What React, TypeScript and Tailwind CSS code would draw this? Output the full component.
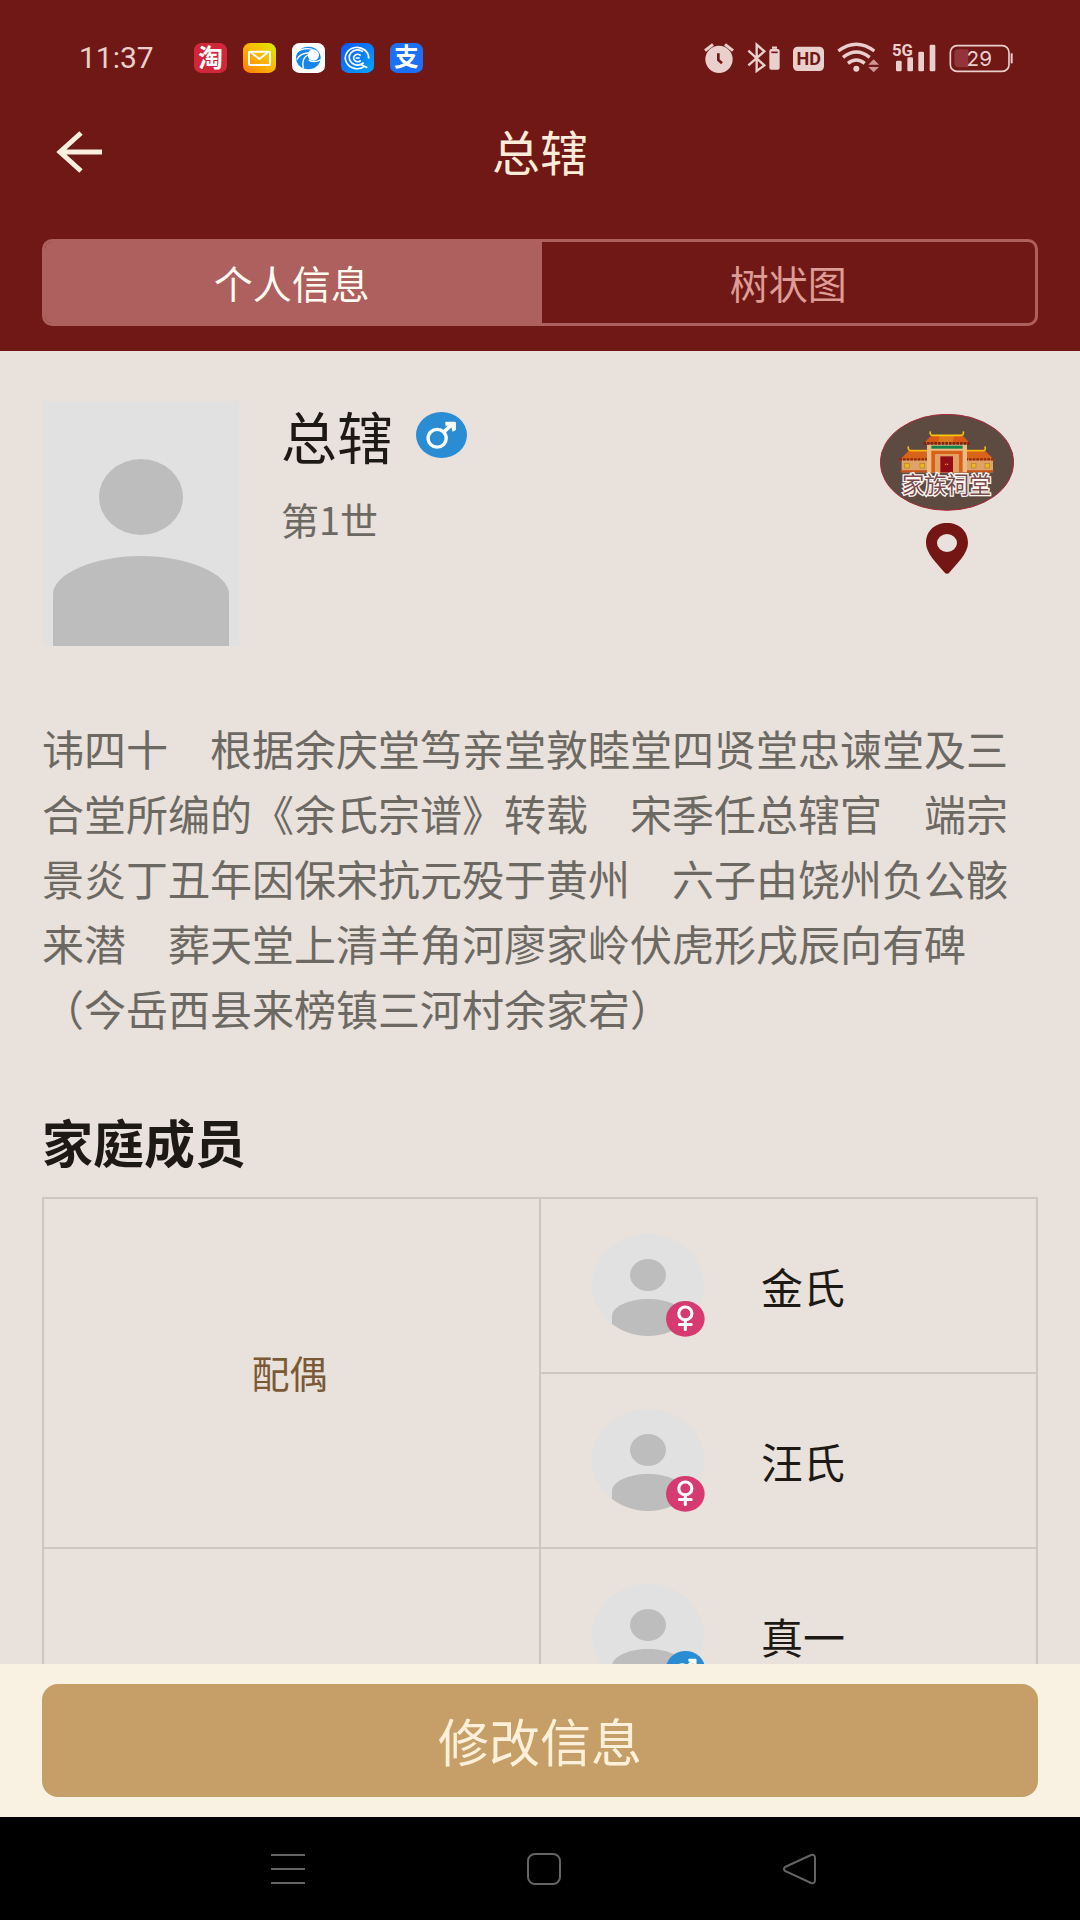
import React from "react";

type Gender = "male" | "female";

interface Member {
  name: string;
  gender: Gender;
}

const spouses: Member[] = [
  { name: "金氏", gender: "female" },
  { name: "汪氏", gender: "female" },
];

const children: Member[] = [{ name: "真一", gender: "male" }];

const biography =
  "讳四十　根据余庆堂笃亲堂敦睦堂四贤堂忠谏堂及三合堂所编的《余氏宗谱》转载　宋季任总辖官　端宗景炎丁丑年因保宋抗元殁于黄州　六子由饶州负公骸来潜　葬天堂上清羊角河廖家岭伏虎形戌辰向有碑（今岳西县来榜镇三河村余家宕）";

function AppTiles() {
  return (
    <div className="flex items-center gap-4">
      <svg viewBox="0 0 99 90" className="h-[30px] w-[33px]">
        <rect width="99" height="90" rx="22" fill="#d0283a" />
        <text x="50" y="71" textAnchor="middle" fontSize="74" fontWeight="700" fill="#fff">淘</text>
      </svg>
      <svg viewBox="0 0 99 90" className="h-[30px] w-[33px]">
        <defs>
          <linearGradient id="mail" x1="0" y1="1" x2="1" y2="0">
            <stop offset="0" stopColor="#ff7a00" />
            <stop offset="0.5" stopColor="#fdb400" />
            <stop offset="1" stopColor="#d8f000" />
          </linearGradient>
        </defs>
        <rect width="99" height="90" rx="22" fill="url(#mail)" />
        <rect x="18" y="26" width="63" height="40" rx="3" fill="none" stroke="#fff" strokeWidth="6" />
        <path d="M25 29 L49 48 L73 29" fill="none" stroke="#fff" strokeWidth="6" />
      </svg>
      <svg viewBox="0 0 99 90" className="h-[30px] w-[33px]">
        <rect width="99" height="90" rx="22" fill="#fff" />
        <ellipse cx="49" cy="45" rx="37" ry="34" fill="#1685ee" />
        <circle cx="64" cy="36" r="17" fill="#fff" />
        <path d="M12 30 Q32 12 62 19 M47 36 Q28 46 34 76 M50 50 Q62 62 88 50 M48 30 Q26 30 14 50" fill="none" stroke="#fff" strokeWidth="4" />
      </svg>
      <svg viewBox="0 0 99 90" className="h-[30px] w-[33px]">
        <defs>
          <linearGradient id="search" x1="0" y1="0" x2="1" y2="1">
            <stop offset="0" stopColor="#0c55fb" />
            <stop offset="1" stopColor="#05a6ff" />
          </linearGradient>
        </defs>
        <rect width="99" height="90" rx="22" fill="url(#search)" />
        <path d="M70 70 A35 32 0 1 1 83 47" fill="none" stroke="#fff" strokeWidth="5" />
        <path d="M66 26 A25 23 0 1 0 68 59 M58 64 L79 74" fill="none" stroke="#fff" strokeWidth="5" />
        <path d="M59 38 A12 11 0 1 0 59 52 M44 45 H56" fill="none" stroke="#fff" strokeWidth="5" />
      </svg>
      <svg viewBox="0 0 99 90" className="h-[30px] w-[33px]">
        <rect width="99" height="90" rx="22" fill="#1b70f5" />
        <text x="49" y="70" textAnchor="middle" fontSize="74" fontWeight="700" fill="#fff">支</text>
      </svg>
    </div>
  );
}

function StatusIcons() {
  return (
    <div className="flex items-center gap-[13px] text-[#e9d0cd]">
      <svg viewBox="70 66 90 96" className="h-8 w-[30px]" fill="none" stroke="currentColor">
        <circle cx="115" cy="118" r="41" fill="currentColor" stroke="none" />
        <path d="M73 92 L97 73 M157 92 L133 73" strokeWidth="9" />
        <path d="M113 100 V120 L124 130" stroke="#701815" strokeWidth="8" />
      </svg>
      <svg viewBox="200 66 99 96" className="h-8 w-[33px]" fill="none" stroke="currentColor">
        <path d="M204 92 L252 136 L229 153 V74 L252 94 L204 136" strokeWidth="7" />
        <rect x="267" y="87" width="31" height="62" rx="6" fill="currentColor" stroke="none" />
        <path d="M275 83 H290" strokeWidth="7" />
        <path d="M273 97 H292" stroke="#701815" strokeWidth="5" />
      </svg>
      <svg viewBox="339 66 93 96" className="h-8 w-[31px]">
        <rect x="339" y="80" width="93" height="73" rx="14" fill="currentColor" />
        <text x="386" y="136" textAnchor="middle" fontSize="54" fontWeight="700" fill="#701815">HD</text>
      </svg>
      <svg viewBox="474 66 126 96" className="h-8 w-[42px]" fill="none" stroke="currentColor">
        <path d="M478 93 Q532 52 586 93 M492 112 Q532 80 572 112 M507 130 Q532 110 557 130" strokeWidth="10" />
        <circle cx="532" cy="146" r="9" fill="currentColor" stroke="none" />
        <path d="M568 134 L584 118 L600 134 Z M568 141 L584 157 L600 141 Z" fill="#c99894" stroke="none" />
      </svg>
      <svg viewBox="636 66 132 96" className="h-8 w-11" fill="currentColor">
        <text x="636" y="108" fontSize="50" fontWeight="700">5G</text>
        <rect x="648" y="122" width="17" height="32" rx="4" />
        <rect x="682" y="112" width="17" height="42" rx="4" />
        <rect x="715" y="95" width="17" height="59" rx="4" />
        <rect x="749" y="74" width="17" height="80" rx="4" />
      </svg>
      <svg viewBox="810 66 195 96" className="h-8 w-[65px]" fill="none" stroke="currentColor">
        <rect x="814" y="77" width="176" height="77" rx="20" strokeWidth="5" />
        <path d="M868 88 H838 Q826 88 826 100 V130 Q826 142 838 142 H868 Z" fill="#92343a" stroke="none" />
        <path d="M998 100 V130" strokeWidth="6" />
        <text x="901" y="138" textAnchor="middle" fontSize="62" className="font-[Inter,sans-serif]" fill="currentColor" stroke="none">29</text>
      </svg>
    </div>
  );
}

function GenderBadge({ gender, className }: { gender: Gender; className: string }) {
  if (gender === "male") {
    return (
      <svg viewBox="0 0 152 140" preserveAspectRatio="none" className={className} role="img" aria-label="男">
        <ellipse cx="76" cy="70" rx="76" ry="70" fill="#2a8cd3" />
        <circle cx="63" cy="80" r="27" fill="none" stroke="#fff" strokeWidth="10" />
        <path d="M82 61 L106 39" stroke="#fff" strokeWidth="11" />
        <path d="M87 31 Q88 29 92 30 H115 Q119 30 119 34 V55 L109 60 L106 48 L98 42 H88 Z" fill="#fff" />
      </svg>
    );
  }
  return (
    <svg viewBox="0 0 113 107" preserveAspectRatio="none" className={className} role="img" aria-label="女">
      <ellipse cx="56" cy="53" rx="56" ry="53" fill="#d53b71" />
      <g fill="none" stroke="#fff" strokeWidth="9" strokeLinecap="round">
        <circle cx="56" cy="37" r="19" />
        <path d="M56 57 V85 M39 70 H73" />
      </g>
    </svg>
  );
}

function Portrait() {
  return (
    <svg viewBox="0 0 198 248" className="h-[248px] w-[198px] shrink-0" role="img" aria-label="头像">
      <rect x="1" y="3" width="196" height="245" fill="#e1e1e1" />
      <ellipse cx="99" cy="99" rx="42" ry="38" fill="#bdbdbd" />
      <path d="M11 248 V196 C11 176 52 158 99 158 C146 158 187 176 187 196 V248 Z" fill="#bdbdbd" />
    </svg>
  );
}

function MemberAvatar({ gender }: { gender: Gender }) {
  return (
    <div className="relative h-[103px] w-[113px] shrink-0 overflow-hidden">
      <svg viewBox="0 0 113 103" className="h-full w-full">
        <defs>
          <clipPath id="round">
            <ellipse cx="56" cy="51" rx="56" ry="51" />
          </clipPath>
        </defs>
        <g clipPath="url(#round)">
          <rect width="113" height="103" fill="#e1e1e1" />
          <ellipse cx="56" cy="41" rx="18" ry="16" fill="#bdbdbd" />
          <path d="M20 103 V82 C20 73 36 65 56 65 C76 65 93 73 93 82 V103 Z" fill="#bdbdbd" />
        </g>
      </svg>
      <GenderBadge gender={gender} className="absolute right-0 bottom-0 h-9 w-[39px]" />
    </div>
  );
}

function AncestralHall() {
  return (
    <svg viewBox="62 71 402 291" className="h-[97px] w-[134px]">
      <ellipse cx="263" cy="216" rx="200" ry="144" fill="#5d4a40" stroke="#a8293a" strokeWidth="3" />
      <rect x="127" y="208" width="274" height="38" fill="#dfa267" />
      <path d="M148 182 H378 L406 210 H120 Z" fill="#d8641c" />
      <path d="M120 207 H406" stroke="#8d2a12" strokeWidth="7" strokeDasharray="8 3" />
      <path d="M147 168 Q145 180 154 181 H208 M320 181 H373 Q380 180 377 168" fill="none" stroke="#f6b90f" strokeWidth="5" />
      <g fill="#e9b91d" stroke="#c07a2c" strokeWidth="2">
        <rect x="136" y="219" width="14" height="14" />
        <rect x="182" y="219" width="14" height="14" />
        <rect x="336" y="219" width="14" height="14" />
        <rect x="377" y="219" width="14" height="14" />
      </g>
      <path d="M124 243 H402" stroke="#c84f18" strokeWidth="6" />
      <rect x="203" y="162" width="120" height="84" fill="#ecbb84" />
      <rect x="216" y="166" width="94" height="9" fill="#12854b" />
      <path d="M216 246 V181 H310 V246 H298 V192 H228 V246 Z" fill="#d86019" />
      <rect x="228" y="192" width="70" height="54" fill="#e2a063" />
      <rect x="243" y="198" width="38" height="48" fill="#930c18" />
      <path d="M259 220 V224 M265 220 V224" stroke="#f4b62c" strokeWidth="3" />
      <path d="M214 137 H312 L332 160 H192 Z" fill="#d85817" />
      <path d="M240 137 H285 L278 160 H236 Z" fill="#dd7a1e" />
      <path d="M192 159 H334" stroke="#7d2414" strokeWidth="8" strokeDasharray="8 3" />
      <path d="M213 123 Q211 135 220 135 H305 Q314 135 312 123" fill="none" stroke="#f9c60f" strokeWidth="5" />
      <text
        x="262"
        y="309"
        textAnchor="middle"
        fontSize="67"
        fontWeight="400"
        fill="#7b4a48"
        stroke="#fbf5f4"
        strokeWidth="8"
        paintOrder="stroke"
      >
        家族祠堂
      </text>
    </svg>
  );
}

function MemberCell({ member }: { member: Member }) {
  return (
    <td className="h-[175px] w-1/2 border-2 border-[#d0c6c1] p-0">
      <div className="flex items-center gap-14 pl-[51px]">
        <MemberAvatar gender={member.gender} />
        <span className="text-[42px] leading-[60px] text-[#1d1a15]">{member.name}</span>
      </div>
    </td>
  );
}

export default function App() {
  return (
    <div className="flex h-screen flex-col bg-[#e9e1db] font-['Noto_Sans_CJK_SC',sans-serif]">
      <header className="bg-[#701815] px-[42px] pb-[25px]">
        <div className="flex items-center justify-between pt-[42px] pr-6 pl-[37px] font-[Roboto,'Noto_Sans_CJK_SC',sans-serif]">
          <div className="flex items-center gap-10">
            <span className="text-[30px] leading-8 text-[#e9d0cd]">11:37</span>
            <AppTiles />
          </div>
          <StatusIcons />
        </div>

        <div className="mt-[38px] grid h-20 grid-cols-[1fr_auto_1fr] items-center">
          <button type="button" aria-label="返回" className="justify-self-start pl-[14px]">
            <svg viewBox="0 0 46 42" className="h-[42px] w-[46px]" fill="none" stroke="#fdf0df" strokeWidth="5">
              <path d="M25 2 L4 21 L25 40 M4 21 H46" />
            </svg>
          </button>
          <h1 className="pb-1 text-[48px] leading-[60px] text-[#fdecd9]">总辖</h1>
        </div>

        <div role="tablist" className="mt-[47px] flex h-[87px] overflow-hidden rounded-[10px] border-3 border-[#ae605e] text-[39px]">
          <button type="button" role="tab" aria-selected="true" className="flex-1 border-r-3 border-[#ae605e] bg-[#ae605e] text-[#fffaf2]">
            个人信息
          </button>
          <button type="button" role="tab" aria-selected="false" className="flex-1 text-[#dd9c96]">
            树状图
          </button>
        </div>
      </header>

      <main className="min-h-0 flex-1 overflow-hidden px-[42px] pt-[47px]">
        <section className="flex items-start">
          <Portrait />
          <div className="flex-1 pt-[9px] pl-[41px]">
            <div className="flex items-center gap-[23px]">
              <h2 className="text-[56px] leading-[56px] text-[#1d1a15]">总辖</h2>
              <GenderBadge gender="male" className="h-[46px] w-[51px]" />
            </div>
            <p className="mt-8 text-[38px] leading-[48px] text-[#6c6963]">第1世</p>
          </div>
          <a href="#hall" aria-label="家族祠堂位置" className="flex flex-col items-center gap-3 pt-4 pr-6">
            <AncestralHall />
            <svg viewBox="0 0 126 153" className="h-[51px] w-[42px]">
              <path
                fillRule="evenodd"
                fill="#741613"
                d="M63 0 C26 0 0 24 0 60 C0 92 34 122 55 148 Q63 157 71 148 C92 122 126 92 126 60 C126 24 100 0 63 0 Z M63 33 A30 27 0 1 1 63 87 A30 27 0 1 1 63 33 Z"
              />
            </svg>
          </a>
        </section>

        <p className="mt-[69px] text-[42px] leading-[65px] text-[#6c6963]">{biography}</p>

        <h2 className="mt-[71px] text-[51px] leading-[60px] font-bold text-[#1d1a15]">家庭成员</h2>
        <table className="mt-[26px] w-full table-fixed border-collapse">
          <tbody>
            {spouses.map((member, index) => (
              <tr key={member.name}>
                {index === 0 && (
                  <th
                    scope="rowgroup"
                    rowSpan={spouses.length}
                    className="w-1/2 border-2 border-[#d0c6c1] p-0 pr-1 pb-1 text-[38px] font-normal text-[#7a5a35]"
                  >
                    配偶
                  </th>
                )}
                <MemberCell member={member} />
              </tr>
            ))}
            {children.map((member) => (
              <tr key={member.name}>
                <td className="border-2 border-[#d0c6c1]" />
                <MemberCell member={member} />
              </tr>
            ))}
          </tbody>
        </table>
      </main>

      <footer>
        <div className="bg-[#f9f1e2] px-[42px] py-5">
          <button type="button" className="h-[113px] w-full rounded-2xl bg-[#c59f67] text-[51px] text-[#fdf0da]">
            修改信息
          </button>
        </div>
        <nav aria-label="系统导航" className="grid h-[103px] grid-cols-3 items-center justify-items-center bg-black pr-[152px] pl-[160px]">
          <button type="button" aria-label="菜单">
            <svg viewBox="0 0 34 34" className="size-[34px]" stroke="#646464" strokeWidth="2">
              <path d="M0 3 H34 M0 17 H34 M0 31 H34" />
            </svg>
          </button>
          <button type="button" aria-label="主页">
            <svg viewBox="0 0 34 34" className="size-[34px]" fill="none" stroke="#646464" strokeWidth="2">
              <rect x="1" y="2" width="32" height="30" rx="7" />
            </svg>
          </button>
          <button type="button" aria-label="后退">
            <svg viewBox="0 0 34 34" className="size-[34px]" fill="none" stroke="#646464" strokeWidth="2">
              <path d="M2 15 L28 3 Q32 2 32 6 V28 Q32 32 28 31 L2 19 Q0 17 2 15 Z" />
            </svg>
          </button>
        </nav>
      </footer>
    </div>
  );
}
